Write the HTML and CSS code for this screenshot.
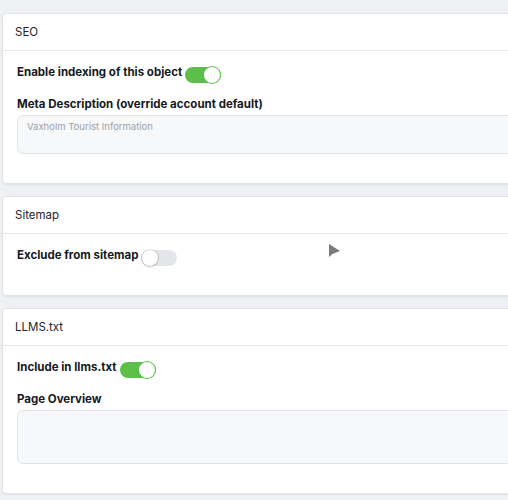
FILE: index.html
```html
<!DOCTYPE html>
<html>
  <head>
    <link rel="stylesheet" href="styles.css">
  </head>
  <body>
    <div class="page">
      <div class="card">
        <div class="card-header">SEO</div>
        <div class="card-body">
          <div class="field toggle-row">
            <span class="label">Enable indexing of this object</span>
            <span class="switch on"><span class="knob"></span></span>
          </div>
          <div class="field">
            <div class="label">Meta Description (override account default)</div>
            <div class="textarea">Vaxholm Tourist Information</div>
          </div>
        </div>
      </div>

      <div class="card">
        <div class="card-header">Sitemap</div>
        <div class="card-body">
          <div class="field toggle-row">
            <span class="label">Exclude from sitemap</span>
            <span class="switch"><span class="knob"></span></span>
          </div>
        </div>
      </div>

      <div class="card">
        <div class="card-header">LLMS.txt</div>
        <div class="card-body">
          <div class="field toggle-row">
            <span class="label">Include in llms.txt</span>
            <span class="switch on"><span class="knob"></span></span>
          </div>
          <div class="field">
            <div class="label">Page Overview</div>
            <div class="textarea tall"></div>
          </div>
        </div>
      </div>
    </div>

    <svg class="cursor" width="13" height="16" viewBox="0 0 13 16">
      <path d="M1 1 L1 14 L4.5 11 L12 8 Z" fill="#7a7a7a"/>
    </svg>
  </body>
</html>
```

FILE: styles.css
```css
html, body {
  margin: 0;
  padding: 0;
}

body {
  background: #eef0f3;
  font-family: "Inter", "Noto Sans", sans-serif;
  color: #1f2328;
  position: relative;
}

.page {
  width: 508px;
  height: 500px;
  box-sizing: border-box;
  padding: 13px 0 0 2px;
  overflow: hidden;
}

.card {
  width: 560px;
  background: #fff;
  border: 1px solid #e1e3e7;
  border-radius: 4px;
  box-shadow: 0 1px 2px rgba(0, 0, 0, 0.06);
  margin-bottom: 12px;
}

.card-header {
  height: 36px;
  line-height: 36px;
  padding: 0 12px;
  font-size: 11.5px;
  border-bottom: 1px solid #e8e9ec;
}

.card-body {
  padding: 12px 14px 17px;
}

.field {
  margin-bottom: 12px;
}

.label {
  font-size: 11.5px;
  font-weight: 700;
  line-height: 18px;
  color: #16191d;
}

.toggle-row {
  display: flex;
  align-items: flex-start;
  gap: 3px;
}

.switch {
  display: inline-flex;
  align-items: center;
  width: 36px;
  height: 16px;
  margin-top: 4px;
  border-radius: 9px;
  background: #e4e5ea;
  box-sizing: border-box;
  padding: 0 1px;
}

.switch.on {
  background: #5bbf4a;
  justify-content: flex-end;
}

.knob {
  width: 16px;
  height: 16px;
  border-radius: 50%;
  background: #fff;
  box-shadow: 0 0 0 1px rgba(0, 0, 0, 0.12), 0 1px 2px rgba(0, 0, 0, 0.15);
}

.switch.on .knob {
  box-shadow: 0 0 0 1px #5bbf4a;
}

.textarea {
  margin-top: 2px;
  height: 39px;
  box-sizing: border-box;
  background: #f7f8fa;
  border: 1px solid #e2e4e8;
  border-radius: 6px;
  padding: 5px 9px;
  font-size: 9.5px;
  color: #9ba1a8;
}

.textarea.tall {
  height: 54px;
}

.cursor {
  position: absolute;
  left: 328px;
  top: 243px;
}
```
